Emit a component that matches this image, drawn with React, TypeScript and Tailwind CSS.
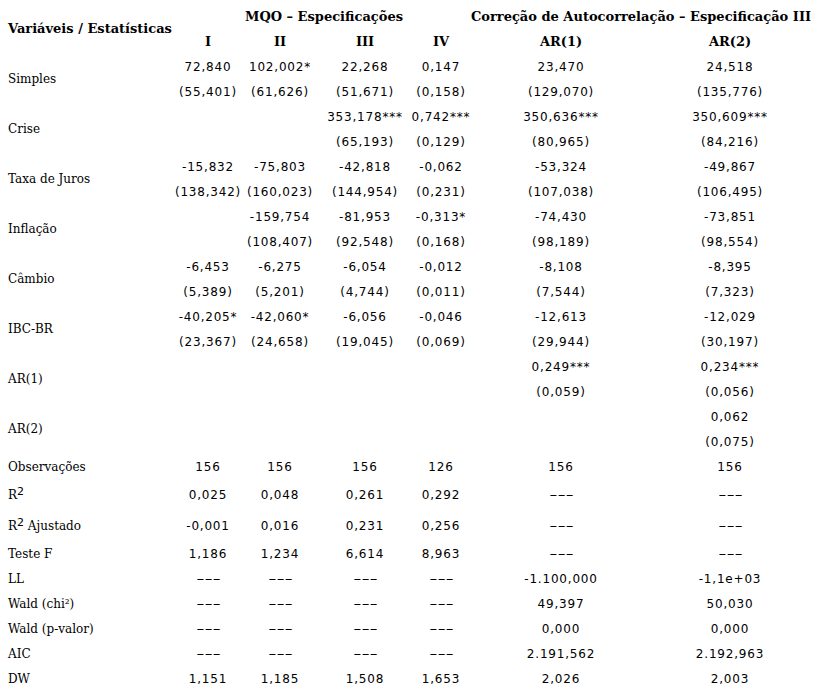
import React from "react";

type VarRow = { label: string; coef: string[]; se: string[] };

const variables: VarRow[] = [
  { label: "Simples", coef: ["72,840", "102,002*", "22,268", "0,147", "23,470", "24,518"], se: ["(55,401)", "(61,626)", "(51,671)", "(0,158)", "(129,070)", "(135,776)"] },
  { label: "Crise", coef: ["", "", "353,178***", "0,742***", "350,636***", "350,609***"], se: ["", "", "(65,193)", "(0,129)", "(80,965)", "(84,216)"] },
  { label: "Taxa de Juros", coef: ["-15,832", "-75,803", "-42,818", "-0,062", "-53,324", "-49,867"], se: ["(138,342)", "(160,023)", "(144,954)", "(0,231)", "(107,038)", "(106,495)"] },
  { label: "Inflação", coef: ["", "-159,754", "-81,953", "-0,313*", "-74,430", "-73,851"], se: ["", "(108,407)", "(92,548)", "(0,168)", "(98,189)", "(98,554)"] },
  { label: "Câmbio", coef: ["-6,453", "-6,275", "-6,054", "-0,012", "-8,108", "-8,395"], se: ["(5,389)", "(5,201)", "(4,744)", "(0,011)", "(7,544)", "(7,323)"] },
  { label: "IBC-BR", coef: ["-40,205*", "-42,060*", "-6,056", "-0,046", "-12,613", "-12,029"], se: ["(23,367)", "(24,658)", "(19,045)", "(0,069)", "(29,944)", "(30,197)"] },
  { label: "AR(1)", coef: ["", "", "", "", "0,249***", "0,234***"], se: ["", "", "", "", "(0,059)", "(0,056)"] },
  { label: "AR(2)", coef: ["", "", "", "", "", "0,062"], se: ["", "", "", "", "", "(0,075)"] },
];

type StatRow = { label: React.ReactNode; values: string[]; tall?: boolean };

const sup2 = <sup className="font-['DejaVu_Sans',sans-serif] text-[11px] relative -top-[4px]">2</sup>;

const stats: StatRow[] = [
  { label: "Observações", values: ["156", "156", "156", "126", "156", "156"] },
  { label: <span>R{sup2}</span>, values: ["0,025", "0,048", "0,261", "0,292", "---", "---"], tall: true },
  { label: <span>R{sup2} Ajustado</span>, values: ["-0,001", "0,016", "0,231", "0,256", "---", "---"], tall: true },
  { label: "Teste F", values: ["1,186", "1,234", "6,614", "8,963", "---", "---"] },
  { label: "LL", values: ["---", "---", "---", "---", "-1.100,000", "-1,1e+03"] },
  { label: "Wald (chi²)", values: ["---", "---", "---", "---", "49,397", "50,030"] },
  { label: "Wald (p-valor)", values: ["---", "---", "---", "---", "0,000", "0,000"] },
  { label: "AIC", values: ["---", "---", "---", "---", "2.191,562", "2.192,963"] },
  { label: "DW", values: ["1,151", "1,185", "1,508", "1,653", "2,026", "2,003"] },
];

const cols = "grid grid-cols-[176px_64px_80px_90px_62px_178px_160px]";
const num = "flex items-center justify-center font-['DejaVu_Sans',sans-serif] text-[12px] tracking-[0.8px] whitespace-nowrap";
const label = "flex items-center pl-2 font-['DejaVu_Serif',serif] text-[12px] whitespace-nowrap";
const head = "flex items-center justify-center font-['DejaVu_Serif',serif] font-bold text-[13px] whitespace-nowrap";

function Cell({ value, className }: { value: string; className?: string }) {
  return (
    <div className={`${num} ${className ?? ""}`}>
      {value === "---" ? <span className="inline-block tracking-[0px] scale-x-[1.9]">---</span> : value}
    </div>
  );
}

export default function App() {
  return (
    <div className="w-[819px] h-[695px] bg-white text-black pt-[4px] overflow-hidden">
      <div className={`${cols} auto-rows-[25px]`}>
        <div className={`${label} row-span-2 font-bold text-[13px]`}>Variáveis / Estatísticas</div>
        <div className={`${head} col-span-4`}>MQO – Especificações</div>
        <div className={`${head} col-span-2`}>Correção de Autocorrelação – Especificação III</div>
        {["I", "II", "III", "IV", "AR(1)", "AR(2)"].map((h) => (
          <div key={h} className={head}>{h}</div>
        ))}

        {variables.map((v) => (
          <React.Fragment key={v.label}>
            <div className={`${label} row-span-2`}>{v.label}</div>
            {v.coef.map((c, i) => (
              <Cell key={"c" + i} value={c} />
            ))}
            {v.se.map((s, i) => (
              <Cell key={"s" + i} value={s} />
            ))}
          </React.Fragment>
        ))}
      </div>

      <div className={cols}>
        {stats.map((s, r) => (
          <React.Fragment key={r}>
            <div className={`${label} ${s.tall ? "h-[31px]" : "h-[25px]"}`}>{s.label}</div>
            {s.values.map((val, i) => (
              <Cell key={i} value={val} className={s.tall ? "h-[31px]" : "h-[25px]"} />
            ))}
          </React.Fragment>
        ))}
      </div>
    </div>
  );
}
